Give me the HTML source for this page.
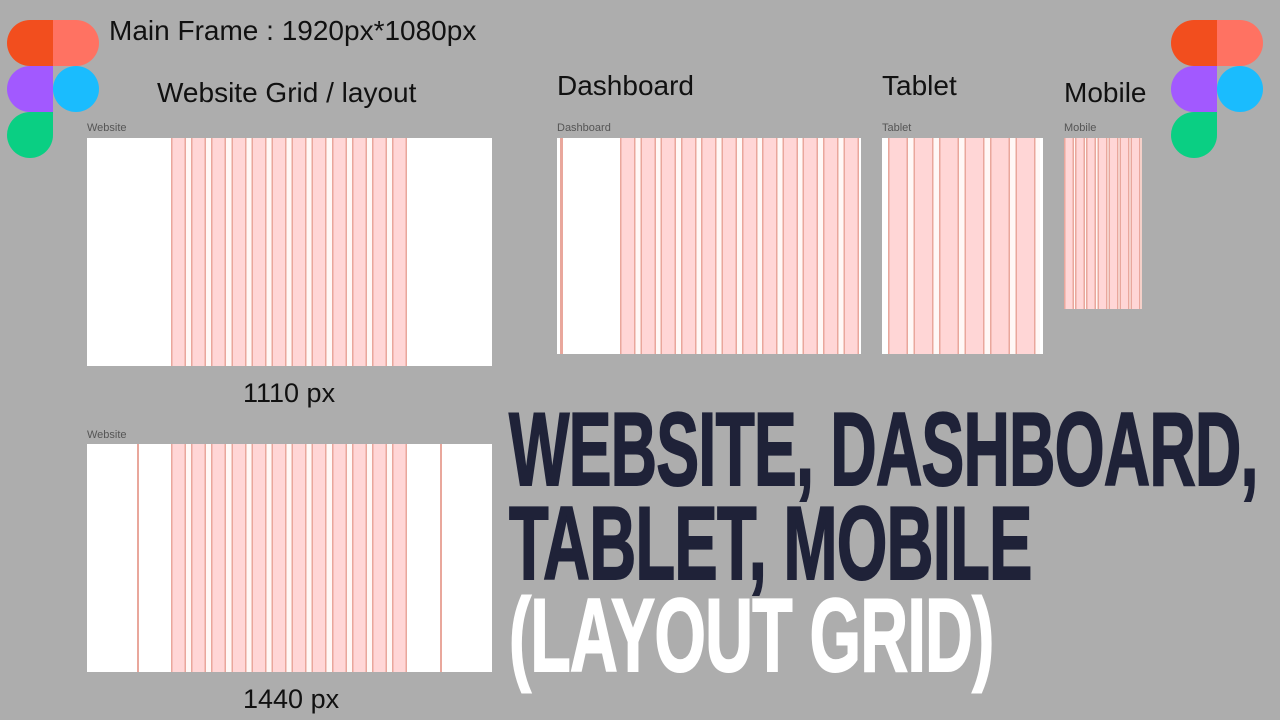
<!DOCTYPE html>
<html><head><meta charset="utf-8"><style>
body{margin:0;width:1280px;height:720px;background:#adadad;position:relative;overflow:hidden;font-family:"Liberation Sans",sans-serif}
.a{position:absolute}
.t{color:#111;font-size:28px;white-space:nowrap}
.s{color:#555;font-size:11px}
.f{background:#fff}
.g{position:absolute;top:0;bottom:0;background:repeating-linear-gradient(90deg,#e9a79c 0,#e9a79c 1.5px,#ffd6d6 1.5px,#ffd6d6 calc(var(--w) - 1.5px),#e9a79c calc(var(--w) - 1.5px),#e9a79c var(--w),#fff8f6 var(--w),#fff8f6 var(--p))}
.big{font-weight:bold;font-size:104px;line-height:1;white-space:nowrap;transform-origin:0 0;letter-spacing:-1px;-webkit-text-stroke:2px currentColor}
</style></head><body>
<svg class="a" style="left:7px;top:20px" width="92" height="138" viewBox="0 0 92 138">
<path d="M46 0H23a23 23 0 0 0 0 46H46z" fill="#f24e1e"/>
<path d="M46 0H69a23 23 0 0 1 0 46H46z" fill="#ff7262"/>
<path d="M46 46H23a23 23 0 0 0 0 46H46z" fill="#a259ff"/>
<circle cx="69" cy="69" r="23" fill="#1abcfe"/>
<path d="M46 92H23a23 23 0 1 0 23 23z" fill="#0acf83"/>
</svg>
<svg class="a" style="left:1171px;top:20px" width="92" height="138" viewBox="0 0 92 138">
<path d="M46 0H23a23 23 0 0 0 0 46H46z" fill="#f24e1e"/>
<path d="M46 0H69a23 23 0 0 1 0 46H46z" fill="#ff7262"/>
<path d="M46 46H23a23 23 0 0 0 0 46H46z" fill="#a259ff"/>
<circle cx="69" cy="69" r="23" fill="#1abcfe"/>
<path d="M46 92H23a23 23 0 1 0 23 23z" fill="#0acf83"/>
</svg>
<div class="a t" style="left:109px;top:15px">Main Frame : 1920px*1080px</div>
<div class="a t" style="left:157px;top:77px">Website Grid / layout</div>
<div class="a t" style="left:557px;top:70px">Dashboard</div>
<div class="a t" style="left:882px;top:70px">Tablet</div>
<div class="a t" style="left:1064px;top:77px">Mobile</div>
<div class="a s" style="left:87px;top:122px">Website</div>
<div class="a s" style="left:557px;top:122px">Dashboard</div>
<div class="a s" style="left:882px;top:122px">Tablet</div>
<div class="a s" style="left:1064px;top:122px">Mobile</div>
<div class="a s" style="left:87px;top:429px">Website</div>

<div class="a f" style="left:87px;top:138px;width:405px;height:228px"><div class="g" style="left:84px;width:236px;--w:15px;--p:20.1px"></div></div>
<div class="a f" style="left:87px;top:444px;width:405px;height:228px">
<div class="g" style="left:84px;width:236px;--w:15px;--p:20.1px"></div>
<div class="a" style="left:50px;top:0;bottom:0;width:2px;background:#e9a79c"></div>
<div class="a" style="left:353px;top:0;bottom:0;width:2px;background:#e9a79c"></div>
</div>
<div class="a t" style="left:243px;top:378px;font-size:27px">1110 px</div>
<div class="a t" style="left:243px;top:684px;font-size:27px">1440 px</div>

<div class="a f" style="left:557px;top:138px;width:304px;height:216px">
<div class="a" style="left:3px;top:0;bottom:0;width:3px;background:#e9a79c"></div>
<div class="g" style="left:63px;width:239px;--w:15.5px;--p:20.3px"></div></div>
<div class="a f" style="left:882px;top:138px;width:161px;height:216px"><div class="g" style="left:6px;width:152px;--w:20px;--p:25.5px"></div></div>
<div class="a" style="left:1064px;top:138px;width:78px;height:171px;background:#ffd6d6">
<div class="g" style="left:0;width:78px;--w:10px;--p:11.1px"></div></div>

<div class="a big" style="left:509px;top:398px;color:#1f2238;transform:scaleX(0.615)">WEBSITE, DASHBOARD,</div>
<div class="a big" style="left:509px;top:492px;color:#1f2238;transform:scaleX(0.623)">TABLET, MOBILE</div>
<div class="a big" style="left:509px;top:584px;color:#fff;transform:scaleX(0.635)">(LAYOUT GRID)</div>
</body></html>
